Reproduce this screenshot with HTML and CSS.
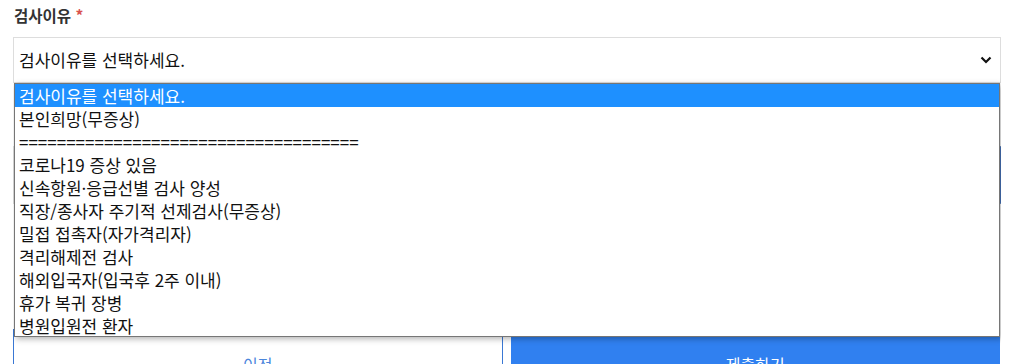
FILE: index.html
```html
<!DOCTYPE html>
<html lang="ko">
<head>
<meta charset="utf-8">
<link rel="stylesheet" href="styles.css">
</head>
<body>
<div class="page">
  <div class="field">
    <div class="label">검사이유 <span class="req">*</span></div>
    <div class="select">
      <span class="select-text">검사이유를 선택하세요.</span>
      <svg class="chev" width="12" height="8" viewBox="0 0 12 8"><path d="M1.5 1.5 L6 6 L10.5 1.5" fill="none" stroke="#111" stroke-width="2.2"/></svg>
    </div>
  </div>
  <div class="field second">
    <div class="bluebox"></div>
  </div>
  <div class="buttons">
    <button class="btn btn-outline">이전</button>
    <button class="btn btn-primary">제출하기</button>
  </div>

  <ul class="listbox">
    <li class="selected">검사이유를 선택하세요.</li>
    <li>본인희망(무증상)</li>
    <li>====================================</li>
    <li>코로나19 증상 있음</li>
    <li>신속항원·응급선별 검사 양성</li>
    <li>직장/종사자 주기적 선제검사(무증상)</li>
    <li>밀접 접촉자(자가격리자)</li>
    <li>격리해제전 검사</li>
    <li>해외입국자(입국후 2주 이내)</li>
    <li>휴가 복귀 장병</li>
    <li>병원입원전 환자</li>
  </ul>
</div>
</body>
</html>
```

FILE: styles.css
```css
html, body {
  margin: 0;
  padding: 0;
  background: #fff;
}
body {
  font-family: "Noto Sans CJK KR", "Noto Sans", sans-serif;
  color: #222;
}
.page {
  position: relative;
  width: 988px;
  margin-left: 13px;
  padding-top: 4px;
  height: 360px;
  overflow: hidden;
}
.label {
  font-size: 15.5px;
  font-weight: 700;
  color: #333;
  line-height: 22px;
  padding-left: 1px;
}
.req {
  color: #d9534f;
  font-weight: 700;
}
.select {
  margin-top: 11px;
  border: 1px solid #ddd;
  display: flex;
  align-items: center;
  justify-content: space-between;
  padding: 0 8px 0 5px;
  box-sizing: border-box;
  height: 46px;
}
.select-text {
  font-size: 17px;
  color: #111;
  line-height: 20px;
}
.chev {
  display: block;
}
.second {
  margin-top: 63px;
}
.bluebox {
  height: 58px;
  border: 1px solid #ddd;
  border-right: 2px solid #4a78c0;
  box-sizing: border-box;
}
.buttons {
  margin-top: 125px;
  display: flex;
  gap: 8px;
}
.btn {
  flex: 1;
  height: 72px;
  font-family: "Noto Sans CJK KR", "Noto Sans", sans-serif;
  font-size: 16px;
  border-radius: 0;
  padding: 0;
  padding-bottom: 2px;
}
.btn-outline {
  background: #fff;
  border: 1px solid #3a78d4;
  color: #4a86dc;
}
.btn-primary {
  background: #3080f0;
  border: 1px solid #3080f0;
  color: #fff;
  margin-right: 1px;
}
.listbox {
  position: absolute;
  left: 1px;
  top: 83px;
  width: 986px;
  margin: 0;
  padding: 0 0 1px 0;
  list-style: none;
  background: #fff;
  border: 1px solid #767676;
  box-sizing: border-box;
  box-shadow: 2px 2px 6px rgba(0, 0, 0, 0.3);
  height: 254px;
}
.listbox li {
  height: 23px;
  line-height: 23px;
  font-size: 17px;
  padding-left: 4px;
  color: #111;
  white-space: nowrap;
}
.listbox li.selected {
  background: #1e90ff;
  color: #fff;
}
```
